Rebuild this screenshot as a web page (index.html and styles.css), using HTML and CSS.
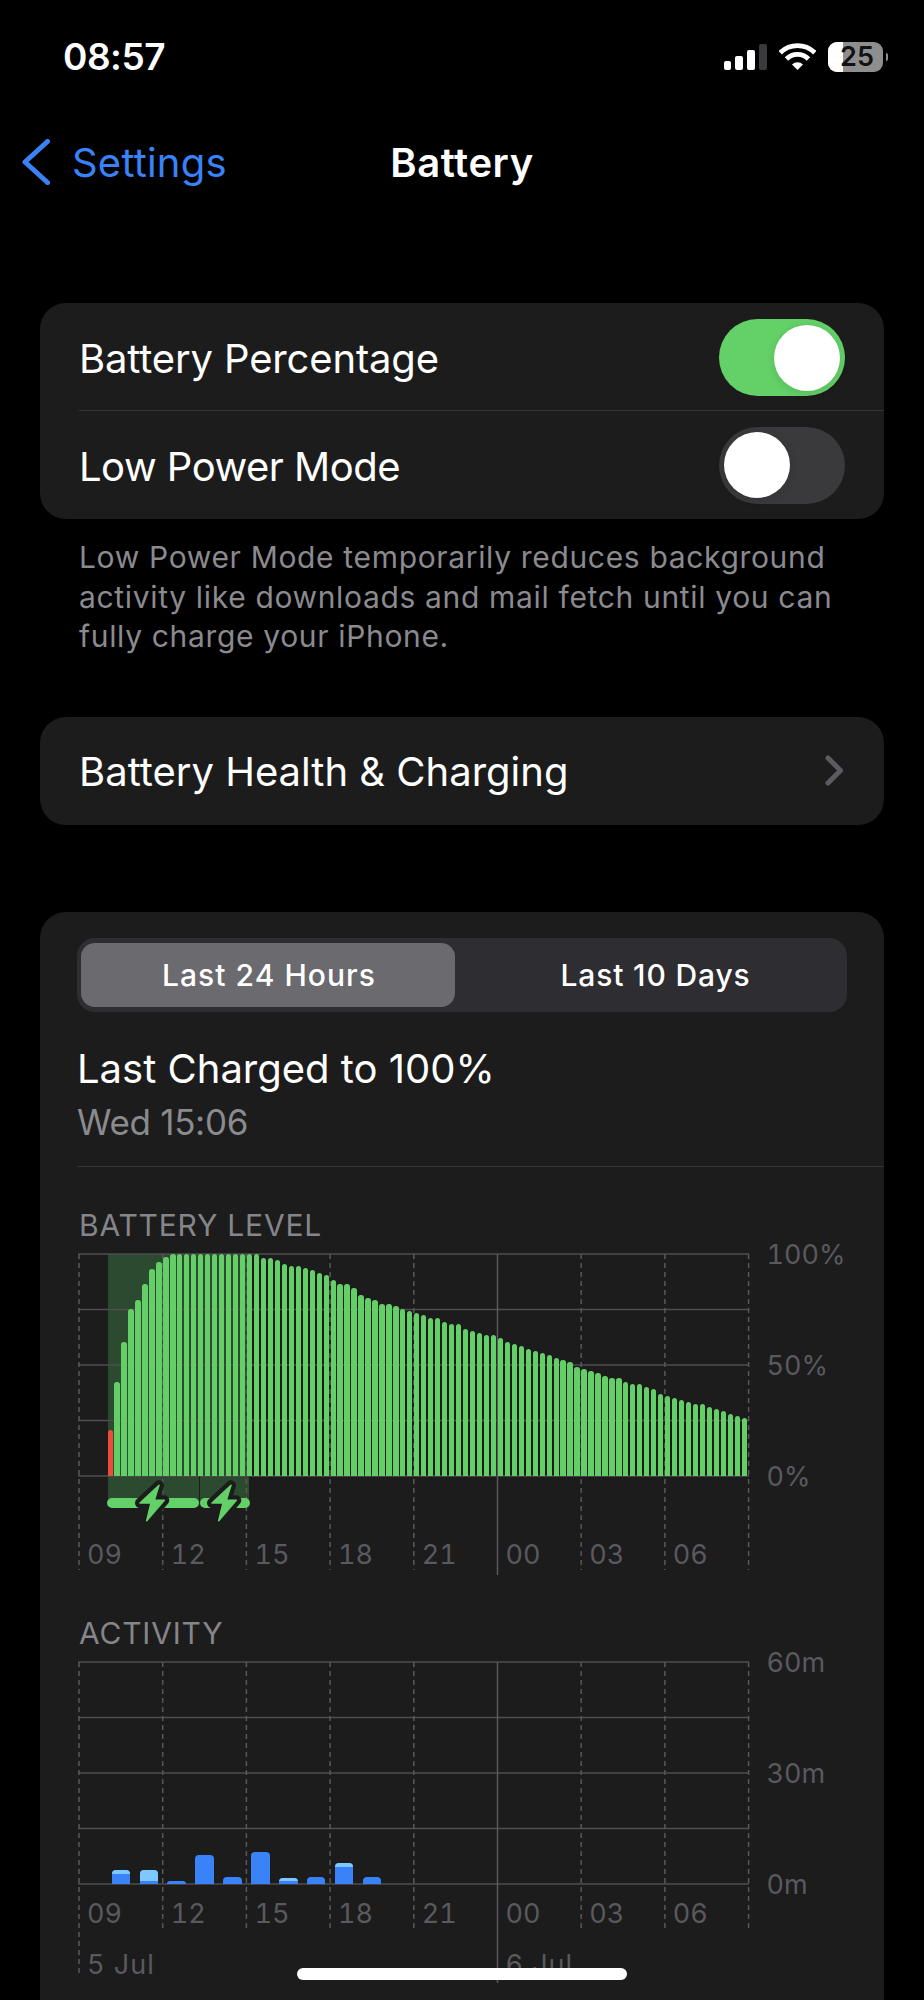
FILE: index.html
```html
<!DOCTYPE html>
<html lang="en">
<head>
<meta charset="utf-8">
<title>Battery</title>
<link rel="stylesheet" href="styles.css">
</head>
<body>
<div class="page">
  <header class="statusbar">
    <span class="time">08:57</span>
    <div class="status-icons">
      <div class="signal"><i class="s1"></i><i class="s2"></i><i class="s3"></i><i class="s4"></i></div>
      <svg class="wifi" viewBox="0 0 37 27"><path class="wifi-arc" d="M1.2 9.7A24.5 24.5 0 0 1 35.8 9.7"/><path class="wifi-arc" d="M7.5 16A15.5 15.5 0 0 1 29.5 16"/><path class="wifi-dot" d="M18.5 27L13 21.5A7.8 7.8 0 0 1 24 21.5Z"/></svg>
      <div class="battery-icon"><div class="battery-body"><span class="battery-fill"></span><span class="battery-num">25</span></div><span class="battery-nub"></span></div>
    </div>
  </header>

  <nav class="navbar">
    <div class="back">
      <svg class="back-chevron" viewBox="0 0 28 46"><path d="M25.5 2.5L3 23L25.5 43.5"/></svg>
      <span>Settings</span>
    </div>
    <h1 class="nav-title">Battery</h1>
  </nav>

  <section class="group">
    <div class="row row-first">
      <span class="row-label">Battery Percentage</span>
      <span class="toggle toggle-on"><span class="knob"></span></span>
    </div>
    <div class="row row-second">
      <span class="row-label">Low Power Mode</span>
      <span class="toggle"><span class="knob"></span></span>
    </div>
  </section>
  <p class="footnote">Low Power Mode temporarily reduces background<br>activity like downloads and mail fetch until you can<br>fully charge your iPhone.</p>

  <section class="group health">
    <span class="row-label">Battery Health &amp; Charging</span>
    <svg class="chevron" viewBox="0 0 19 31"><path d="M3 3L15.5 15.5L3 28"/></svg>
  </section>

  <section class="group usage">
    <div class="segmented">
      <span class="segment segment-active">Last 24 Hours</span>
      <span class="segment segment-other">Last 10 Days</span>
    </div>
    <div class="charged-title">Last Charged to 100%</div>
    <div class="charged-sub">Wed 15:06</div>
    <div class="divider"></div>

    <h2 class="chart-title chart-title-first">BATTERY LEVEL</h2>
    <div class="chart-row">
      <div class="plot">
        <div class="band"><span class="band-split"></span></div>
        <svg class="grid" width="670" height="321" viewBox="0 0 670 321">
          <path class="h" d="M-1 0H670M-1 55.5H670M-1 111H670M-1 166.5H670M-1 222H670"/>
          <path class="d" d="M0 0V316M83.7 0V316M167.4 0V316M251.1 0V316M334.8 0V316M502.2 0V316M585.9 0V316M669.6 0V316"/>
          <path class="s" d="M418.5 0V321"/>
        </svg>
        <div class="level-bars">
          <i class="bar bar-low" style="height:46px"></i>
          <i class="bar" style="height:94.3px"></i><i class="bar" style="height:134.3px"></i><i class="bar" style="height:167.7px"></i><i class="bar" style="height:176.7px"></i><i class="bar" style="height:192.7px"></i><i class="bar" style="height:207.7px"></i><i class="bar" style="height:214.3px"></i><i class="bar" style="height:219.3px"></i>
          <i class="bar" style="height:222px"></i><i class="bar" style="height:222px"></i><i class="bar" style="height:222px"></i><i class="bar" style="height:222px"></i><i class="bar" style="height:222px"></i><i class="bar" style="height:222px"></i><i class="bar" style="height:222px"></i><i class="bar" style="height:222px"></i><i class="bar" style="height:222px"></i><i class="bar" style="height:222px"></i><i class="bar" style="height:222px"></i><i class="bar" style="height:222px"></i><i class="bar" style="height:222px"></i>
          <i class="bar" style="height:218.7px"></i><i class="bar" style="height:218.7px"></i><i class="bar" style="height:216.7px"></i><i class="bar" style="height:212px"></i><i class="bar" style="height:210px"></i><i class="bar" style="height:210px"></i><i class="bar" style="height:208px"></i><i class="bar" style="height:206px"></i><i class="bar" style="height:203.3px"></i><i class="bar" style="height:201.3px"></i><i class="bar" style="height:196.7px"></i><i class="bar" style="height:192.7px"></i><i class="bar" style="height:192.7px"></i><i class="bar" style="height:188px"></i>
          <i class="bar" style="height:181px"></i><i class="bar" style="height:178.7px"></i><i class="bar" style="height:176.7px"></i><i class="bar" style="height:172px"></i><i class="bar" style="height:172px"></i><i class="bar" style="height:170px"></i><i class="bar" style="height:167.7px"></i><i class="bar" style="height:165.7px"></i><i class="bar" style="height:163.3px"></i><i class="bar" style="height:161px"></i><i class="bar" style="height:158.7px"></i><i class="bar" style="height:158.7px"></i><i class="bar" style="height:154.3px"></i><i class="bar" style="height:152px"></i><i class="bar" style="height:152px"></i><i class="bar" style="height:147.7px"></i><i class="bar" style="height:145.3px"></i><i class="bar" style="height:143px"></i><i class="bar" style="height:141px"></i><i class="bar" style="height:141px"></i>
          <i class="bar" style="height:138.7px"></i><i class="bar" style="height:134.3px"></i><i class="bar" style="height:132.3px"></i><i class="bar" style="height:130px"></i><i class="bar" style="height:127.7px"></i><i class="bar" style="height:125.3px"></i><i class="bar" style="height:123.3px"></i><i class="bar" style="height:121px"></i><i class="bar" style="height:118.7px"></i><i class="bar" style="height:116.3px"></i><i class="bar" style="height:114.3px"></i><i class="bar" style="height:109.7px"></i><i class="bar" style="height:107.7px"></i><i class="bar" style="height:105.3px"></i><i class="bar" style="height:103px"></i><i class="bar" style="height:100.7px"></i><i class="bar" style="height:98.7px"></i><i class="bar" style="height:98.7px"></i><i class="bar" style="height:94px"></i><i class="bar" style="height:92px"></i><i class="bar" style="height:92px"></i><i class="bar" style="height:89.7px"></i><i class="bar" style="height:87.3px"></i><i class="bar" style="height:82.7px"></i><i class="bar" style="height:80.7px"></i><i class="bar" style="height:78.3px"></i><i class="bar" style="height:76px"></i><i class="bar" style="height:74px"></i><i class="bar" style="height:72px"></i><i class="bar" style="height:72px"></i><i class="bar" style="height:69.3px"></i><i class="bar" style="height:67.3px"></i><i class="bar" style="height:65.3px"></i><i class="bar" style="height:62.7px"></i><i class="bar" style="height:60.7px"></i><i class="bar" style="height:58.7px"></i>
        </div>
      </div>
      <div class="y-axis"><span>100%</span><span>50%</span><span>0%</span></div>
    </div>
    <div class="charge-row">
      <span class="pill pill-long"></span><span class="pill pill-short"></span>
      <svg class="bolt bolt-a" viewBox="0 0 34 40"><path class="bolt-edge" d="M24 2.3L5 20L16 20L11.7 37.7L29.3 17.3L19.3 17.3Z"/><path class="bolt-fill" d="M24 2.3L5 20L16 20L11.7 37.7L29.3 17.3L19.3 17.3Z"/></svg>
      <svg class="bolt bolt-b" viewBox="0 0 34 40"><path class="bolt-edge" d="M24 2.3L5 20L16 20L11.7 37.7L29.3 17.3L19.3 17.3Z"/><path class="bolt-fill" d="M24 2.3L5 20L16 20L11.7 37.7L29.3 17.3L19.3 17.3Z"/></svg>
    </div>
    <div class="x-axis x-axis-level"><span>09</span><span>12</span><span>15</span><span>18</span><span>21</span><span>00</span><span>03</span><span>06</span></div>

    <h2 class="chart-title chart-title-second">ACTIVITY</h2>
    <div class="chart-row">
      <div class="plot">
        <svg class="grid" width="670" height="321" viewBox="0 0 670 321">
          <path class="h" d="M-1 0H670M-1 55.5H670M-1 111H670M-1 166.5H670M-1 222H670"/>
          <path class="d" d="M0 0V315M83.7 0V266M167.4 0V266M251.1 0V266M334.8 0V266M502.2 0V266M585.9 0V266M669.6 0V266"/>
          <path class="s" d="M418.5 0V321"/>
        </svg>
        <div class="activity-bars">
          <div class="abar" style="height:14.7px"><i class="abar-light" style="height:4px"></i></div>
          <div class="abar" style="height:14.7px"><i class="abar-light" style="height:11.7px"></i></div>
          <div class="abar" style="height:3px"></div>
          <div class="abar" style="height:29.3px"></div>
          <div class="abar" style="height:7px"></div>
          <div class="abar" style="height:32.7px"></div>
          <div class="abar" style="height:6.3px"><i class="abar-light" style="height:3.3px"></i></div>
          <div class="abar" style="height:7px"></div>
          <div class="abar" style="height:21px"><i class="abar-light" style="height:3.3px"></i></div>
          <div class="abar" style="height:7px"></div>
        </div>
      </div>
      <div class="y-axis"><span>60m</span><span>30m</span><span>0m</span></div>
    </div>
    <div class="x-axis x-axis-activity"><span>09</span><span>12</span><span>15</span><span>18</span><span>21</span><span>00</span><span>03</span><span>06</span></div>
    <div class="x-axis x-axis-dates"><span class="date-first">5 Jul</span><span class="date-second">6 Jul</span></div>
  </section>

  <div class="home-indicator"></div>
</div>
</body>
</html>
```
FILE: styles.css
```css
* { box-sizing: border-box; }
html, body { margin: 0; padding: 0; background: #000; }
body { font-family: Inter, "Liberation Sans", sans-serif; color: #fff; }
i { display: block; }

.page { position: relative; width: 924px; height: 2000px; overflow: hidden; background: #000; }

/* status bar */
.statusbar { height: 113px; display: flex; justify-content: space-between; align-items: center; padding: 0 36px 0 63px; }
.time { font-size: 37px; font-weight: 600; letter-spacing: -0.5px; }
.status-icons { display: flex; align-items: center; }
.signal { display: flex; align-items: flex-end; gap: 4.3px; height: 26px; margin-right: 12.5px; }
.signal i { width: 7.5px; border-radius: 2px; background: #fff; }
.signal .s1 { height: 9px; }
.signal .s2 { height: 14px; }
.signal .s3 { height: 20px; }
.signal .s4 { height: 26px; background: #3a3a3c; }
.wifi { width: 37px; height: 27px; margin-right: 12px; }
.wifi-arc { fill: none; stroke: #fff; stroke-width: 4.8; }
.wifi-dot { fill: #fff; }
.battery-icon { display: flex; align-items: center; gap: 2.5px; }
.battery-body { position: relative; width: 55px; height: 30px; border-radius: 9px; background: #8e8e8e; display: flex; align-items: center; justify-content: center; }
.battery-fill { position: absolute; left: 0; top: 0; bottom: 0; width: 15px; background: #fff; border-radius: 9px 0 0 9px; }
.battery-num { position: relative; color: #111; font-size: 27px; font-weight: 600; line-height: 30px; margin-left: 3px; }
.battery-nub { width: 2.5px; height: 8px; border-radius: 0 3px 3px 0; background: #8e8e8e; }

/* navigation */
.navbar { position: relative; height: 98px; display: flex; align-items: center; justify-content: center; }
.back { position: absolute; left: 22px; top: 0; bottom: 0; display: flex; align-items: center; color: #3a82f7; font-size: 40px; letter-spacing: 0.2px; }
.back-chevron { width: 28px; height: 46px; margin-right: 22px; }
.back-chevron path { fill: none; stroke: #3a82f7; stroke-width: 5; stroke-linecap: round; stroke-linejoin: round; }
.nav-title { margin: 0; font-size: 40px; font-weight: 600; letter-spacing: 0.55px; }

/* groups */
.group { margin: 92px 40px 0; background: #1c1c1c; border-radius: 26px; font-size: 40px; letter-spacing: -0.15px; }
.row { display: flex; justify-content: space-between; align-items: center; margin-left: 39px; padding-right: 39px; }
.row-label { padding-top: 2px; }
.row-first { height: 108px; padding-top: 2px; border-bottom: 1.5px solid #333335; }
.row-second { height: 108px; letter-spacing: -0.5px; }
.toggle { position: relative; width: 126px; height: 77px; border-radius: 39px; background: #3a3a3c; display: flex; align-items: center; padding: 0 5px; }
.toggle-on { background: #63d168; justify-content: flex-end; }
.knob { width: 66px; height: 66px; border-radius: 50%; background: #fff; box-shadow: 0 2px 10px rgba(0,0,0,.12); }
.footnote { margin: 19px 40px 0 79px; font-size: 30px; line-height: 39.6px; color: #8a8a8f; letter-spacing: 0.66px; white-space: nowrap; }

.health { margin-top: 60px; height: 108px; display: flex; justify-content: space-between; align-items: center; padding: 0 40px 0 39px; letter-spacing: 0; }
.chevron { width: 19px; height: 31px; }
.chevron path { fill: none; stroke: #5c5c60; stroke-width: 5; stroke-linecap: round; stroke-linejoin: round; }

/* usage card */
.usage { margin-top: 87px; padding: 26px 0 200px 37px; letter-spacing: normal; }
.segmented { width: 770px; height: 74px; padding: 5px 1px 5px 4px; display: flex; background: #2e2e32; border-radius: 18px; }
.segment { flex: 1; display: flex; align-items: center; justify-content: center; font-size: 30px; font-weight: 500; letter-spacing: 0.85px; border-radius: 14px; padding-top: 1px; }
.segment-active { flex: 0 0 374px; background: #6a6a6f; letter-spacing: 1.05px; padding-left: 2px; }
.segment-other { padding-left: 10px; }
.charged-title { margin-top: 33px; line-height: 48px; font-size: 40px; letter-spacing: 0; }
.charged-sub { margin-top: 7px; line-height: 44px; font-size: 35px; color: #8a8a8f; letter-spacing: -0.3px; }
.divider { height: 1.5px; margin-top: 22px; background: #333335; }

.chart-title { margin: 0; font-size: 30px; line-height: 36px; font-weight: 400; color: #85858a; padding-left: 2px; letter-spacing: 0.8px; }
.chart-title-first { margin-top: 40px; margin-bottom: 11px; }
.chart-title-second { margin-top: 44px; margin-bottom: 11px; }

.chart-row { display: flex; margin-left: 2px; }
.plot { position: relative; width: 670px; height: 222px; }
.grid { position: absolute; left: 0; top: 0; overflow: visible; }
.grid path { fill: none; stroke-width: 1.5; }
.grid .h { stroke: #4e4e52; }
.grid .d { stroke: #58585c; stroke-dasharray: 5 4; }
.grid .s { stroke: #58585c; }

.band { position: absolute; left: 28.7px; top: 0; width: 141.5px; height: 249px; background: #2c4a2f; }
.band-split { position: absolute; left: 91px; bottom: 0; width: 1px; height: 27px; background: #1c1c1c; }

.level-bars { position: relative; height: 100%; display: flex; align-items: flex-end; gap: 1.675px; padding-left: 28.5px; }
.bar { flex: 0 0 5.3px; border-radius: 2.65px 2.65px 0 0; background: #63cf66; }
.bar-low { background: #eb4e3d; }

.y-axis { display: flex; flex-direction: column; justify-content: space-between; height: 222px; margin-left: 17.5px; font-size: 27px; color: #59595e; font-variant-numeric: tabular-nums; }
.y-axis span { display: flex; align-items: center; height: 0; }

.charge-row { position: relative; display: flex; gap: 1.5px; height: 10px; margin: 22px 0 30px 30.2px; }
.pill { height: 10px; border-radius: 5px; background: #63d168; }
.pill-long { width: 91.5px; }
.pill-short { width: 49.5px; }
.bolt { position: absolute; top: -15px; width: 34px; height: 40px; overflow: visible; }
.bolt-a { left: 28px; }
.bolt-b { left: 100px; }
.bolt-edge { fill: #1c1c1c; stroke: #1c1c1c; stroke-width: 10; stroke-linejoin: round; }
.bolt-fill { fill: #63d168; stroke: #63d168; stroke-width: 1.5; stroke-linejoin: round; }

.x-axis { display: grid; grid-template-columns: repeat(8, 83.7px); margin-left: 2px; font-size: 27px; line-height: 33px; color: #59595e; position: relative; font-variant-numeric: tabular-nums; }
.x-axis span { padding-left: 8px; }
.x-axis-activity { margin-top: 13px; }
.x-axis-dates { margin-top: 18px; }
.date-first { grid-column: 1 / span 5; letter-spacing: 1px; }
.date-second { grid-column: 6 / span 3; letter-spacing: 1px; }

.activity-bars { position: relative; height: 100%; display: flex; align-items: flex-end; gap: 9.4px; padding-left: 32.7px; }
.abar { width: 18.5px; border-radius: 4px 4px 0 0; background: #3a82f7; overflow: hidden; }
.abar-light { background: #7cc8ff; }

.home-indicator { position: absolute; left: 297px; top: 1968px; width: 330px; height: 12px; border-radius: 6px; background: #fff; }
```
